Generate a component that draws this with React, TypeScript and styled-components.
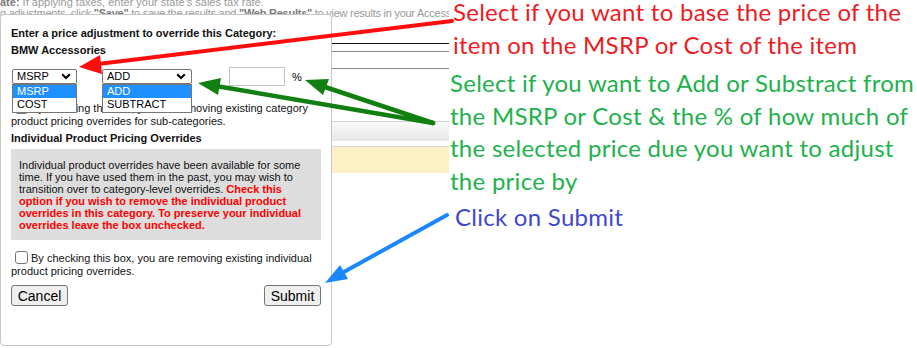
import React from 'react'
import styled, { createGlobalStyle } from 'styled-components'

const GlobalStyle = createGlobalStyle`
    html, body {
        margin: 0;
        padding: 0;
        background: #ffffff;
    }
    body {
        font-family: 'Liberation Sans', Arial, sans-serif;
    }
`

const Page = styled.div`
    position: relative;
    display: flex;
    width: 917px;
    height: 348px;
    overflow: hidden;
    background: #ffffff;
`

const Shot = styled.div`
    position: relative;
    flex: none;
    width: 450px;
    height: 348px;
`

const Backdrop = styled.div`
    width: 449px;
    display: flex;
    flex-direction: column;
    overflow: hidden;
`

const NoticeLine = styled.div<{ $tight?: boolean }>`
    font-size: 11px;
    line-height: 11px;
    color: #9a9a9a;
    white-space: nowrap;
    letter-spacing: ${(p) => (p.$tight ? '-0.25px' : '0')};
    &:first-child {
        margin-top: -3px;
    }
    b {
        color: #7a7a7a;
    }
`

const Rule = styled.div<{ $color: string; $gap: number }>`
    height: 1px;
    margin-top: ${(p) => p.$gap}px;
    background: ${(p) => p.$color};
`

const TableHead = styled.div`
    margin-top: 52px;
    height: 19px;
    border-top: 1px solid #cfcfcf;
    background: linear-gradient(#fafafa, #e6e6e6);
`

const TableRow = styled.div`
    margin-top: 5px;
    height: 26px;
    border-top: 1px solid #d8d8d8;
    background: #fdf0c4;
`

const Dialog = styled.div`
    position: absolute;
    left: 0;
    top: 14px;
    width: 332px;
    height: 332px;
    box-sizing: border-box;
    padding: 10px 10px 0 10px;
    border: 1px solid #c6c6c6;
    border-radius: 4px;
    background: #ffffff;
    color: #111111;
    font-size: 11px;
    z-index: 1;
`

const Title = styled.div`
    font-weight: bold;
    line-height: 17px;
`

const Controls = styled.div`
    display: flex;
    align-items: center;
    height: 19px;
    margin-top: 8px;
`

const SelectBox = styled.div<{ $width: number; $gap: number }>`
    position: relative;
    box-sizing: border-box;
    width: ${(p) => p.$width}px;
    height: 15px;
    margin-left: ${(p) => p.$gap}px;
    padding: 0 5px 0 4px;
    display: flex;
    align-items: center;
    justify-content: space-between;
    border: 1px solid #767676;
    border-radius: 2px;
    background: #ffffff;
    color: #000000;
    line-height: 13px;
`

const OptionList = styled.div`
    position: absolute;
    left: -1px;
    right: -1px;
    top: 14px;
    border: 1px solid #767676;
    background: #ffffff;
    z-index: 2;
`

const Option = styled.div<{ $active?: boolean }>`
    height: 13px;
    line-height: 13px;
    padding-left: 4px;
    font-size: 11px;
    color: ${(p) => (p.$active ? '#ffffff' : '#000000')};
    background: ${(p) => (p.$active ? '#1e90ff' : '#ffffff')};
    & + & {
        height: 14px;
    }
`

const PercentInput = styled.div`
    box-sizing: border-box;
    width: 56px;
    height: 19px;
    margin-left: 37px;
    border: 1px solid #c4c4c4;
`

const Percent = styled.span`
    margin-left: 7px;
    color: #000000;
`

const CheckText = styled.div<{ $gap: number }>`
    margin-top: ${(p) => p.$gap}px;
    line-height: 13px;
    color: #111111;
`

const Box = styled.span`
    display: inline-block;
    box-sizing: border-box;
    width: 13px;
    height: 13px;
    margin: 0 3px 0 4px;
    vertical-align: -2px;
    border: 1px solid #767676;
    border-radius: 3px;
    background: #ffffff;
`

const Heading = styled.div`
    margin-top: 2px;
    font-size: 11px;
    font-weight: bold;
    line-height: 16px;
`

const InfoBox = styled.div`
    margin-top: 3px;
    padding: 10px 8px 9px 8px;
    background: #dddddd;
    line-height: 12px;
    color: #111111;
    strong {
        color: #ff0000;
    }
`

const Buttons = styled.div`
    display: flex;
    justify-content: space-between;
    margin-top: 7px;
`

const Button = styled.button`
    width: 57px;
    height: 21px;
    padding: 0;
    border: 1px solid #767676;
    border-radius: 3px;
    background: #efefef;
    color: #000000;
    font-family: 'Liberation Sans', Arial, sans-serif;
    font-size: 14px;
`

const Notes = styled.div`
    display: flex;
    flex-direction: column;
    font-family: Lato, 'Open Sans', sans-serif;
    font-size: 24px;
    line-height: 32.5px;
    letter-spacing: 0.27px;
`

const Note = styled.div<{ $color: string; $indent: number; $gap: number }>`
    color: ${(p) => p.$color};
    padding-left: ${(p) => p.$indent}px;
    margin-top: ${(p) => p.$gap}px;
    white-space: nowrap;
`

const Arrows = styled.svg`
    position: absolute;
    left: 0;
    top: 0;
    pointer-events: none;
    z-index: 5;
`

const Chevron = () => (
    <svg width='10' height='7' viewBox='0 0 10 7'>
        <path d='M1.2 1.2 L5 5 L8.8 1.2' fill='none' stroke='#000' strokeWidth='2' />
    </svg>
)

const App = () => {
    return (
        <Page>
            <GlobalStyle />
            <Shot>
                <Backdrop>
                    <NoticeLine>
                        <b>ate:</b> If applying taxes, enter your state's sales tax rate.
                    </NoticeLine>
                    <NoticeLine $tight>
                        g adjustments, click <b>"Save"</b> to save the results and <b>"Web Results"</b> to view
                        results in your Accessories table.
                    </NoticeLine>
                    <Rule $color='#111111' $gap={24} />
                    <Rule $color='#8a8a8a' $gap={7} />
                    <Rule $color='#8a8a8a' $gap={16} />
                    <TableHead />
                    <TableRow />
                </Backdrop>
                <Dialog>
                    <Title>Enter a price adjustment to override this Category:</Title>
                    <Title>BMW Accessories</Title>
                    <Controls>
                        <SelectBox $width={65} $gap={1}>
                            <span>MSRP</span>
                            <Chevron />
                            <OptionList>
                                <Option $active>MSRP</Option>
                                <Option>COST</Option>
                            </OptionList>
                        </SelectBox>
                        <SelectBox $width={90} $gap={25}>
                            <span>ADD</span>
                            <Chevron />
                            <OptionList>
                                <Option $active>ADD</Option>
                                <Option>SUBTRACT</Option>
                            </OptionList>
                        </SelectBox>
                        <PercentInput />
                        <Percent>%</Percent>
                    </Controls>
                    <CheckText $gap={15}>
                        <Box />
                        By checking this box, you are removing existing category product pricing overrides
                        for sub-categories.
                    </CheckText>
                    <Heading>Individual Product Pricing Overrides</Heading>
                    <InfoBox>
                        Individual product overrides have been available for some time. If you have used them
                        in the past, you may wish to transition over to category-level overrides.{' '}
                        <strong>
                            Check this option if you wish to remove the individual product overrides in this
                            category. To preserve your individual overrides leave the box unchecked.
                        </strong>
                    </InfoBox>
                    <CheckText $gap={11}>
                        <Box />
                        By checking this box, you are removing existing individual product pricing
                        overrides.
                    </CheckText>
                    <Buttons>
                        <Button>Cancel</Button>
                        <Button>Submit</Button>
                    </Buttons>
                </Dialog>
            </Shot>
            <Notes>
                <Note $color='#ed1c24' $indent={3} $gap={-4}>
                    Select if you want to base the price of the
                    <br />
                    item on the MSRP or Cost of the item
                </Note>
                <Note $color='#22b14c' $indent={0} $gap={6}>
                    Select if you want to Add or Substract from
                    <br />
                    the MSRP or Cost &amp; the % of how much of
                    <br />
                    the selected price due you want to adjust
                    <br />
                    the price by
                </Note>
                <Note $color='#3f48cc' $indent={5} $gap={4}>
                    Click on Submit
                </Note>
            </Notes>
            <Arrows width='917' height='348' viewBox='0 0 917 348'>
                <g fill='#ff0d0d' stroke='#ff0d0d'>
                    <line x1='452' y1='21' x2='98' y2='64' strokeWidth='4' strokeLinecap='round' />
                    <polygon points='79,67 102,74 100,55' stroke='none' />
                </g>
                <g fill='#117f11' stroke='#117f11'>
                    <line x1='433' y1='123' x2='216' y2='86' strokeWidth='4.5' strokeLinecap='round' />
                    <polygon points='198,83 221,78 218,95' stroke='none' />
                    <line x1='433' y1='123' x2='322' y2='86' strokeWidth='4.5' strokeLinecap='round' />
                    <polygon points='305,80 329,79 323,95' stroke='none' />
                </g>
                <g fill='#1a87ff' stroke='#1a87ff'>
                    <line x1='447' y1='215' x2='342' y2='273' strokeWidth='4' strokeLinecap='round' />
                    <polygon points='325,283 340,265 348,279' stroke='none' />
                </g>
            </Arrows>
        </Page>
    )
}

export default App
